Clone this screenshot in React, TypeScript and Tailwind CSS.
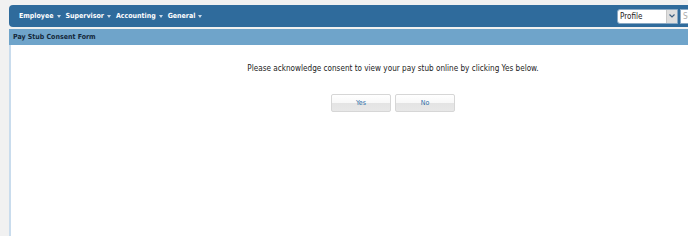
const navItems = ['Employee', 'Supervisor', 'Accounting', 'General'];

function Caret() {
  return (
    <svg aria-hidden="true" width="4" height="3" viewBox="0 0 4 3" className="ml-[3px] mt-[1px]">
      <path d="M0 0H4L2 3Z" fill="#c9d9e8" />
    </svg>
  );
}

function ConsentButton({ label }: { label: string }) {
  return (
    <button
      type="button"
      className="h-[18px] w-[60px] rounded-[2px] border border-[#d6d6d6] bg-[linear-gradient(#ffffff_0%,#f8f8f8_48%,#e4e4e4_52%,#e8e8e8_100%)] text-[7px] leading-[16px] text-[#2f6ea6] font-['DejaVu_Sans_Condensed','DejaVu_Sans',sans-serif]"
    >
      {label}
    </button>
  );
}

export default function App() {
  return (
    <div className="h-[236px] w-full overflow-hidden bg-[#f1f1f1] font-['DejaVu_Sans_Condensed','DejaVu_Sans',sans-serif]">
      <div className="relative h-[5px]">
        <span className="absolute left-[666px] top-[-7px] text-[8px] leading-[10px] text-[#333]">Welcome</span>
      </div>
      <div className="ml-[9px] w-[766px]">
        <div className="flex h-[22px] items-center rounded-[4px] bg-[#2f6b9c] pl-[10px] pr-[15px]">
          <nav className="flex items-center gap-[5px]">
            {navItems.map((item) => (
              <div key={item} className="flex items-center">
                <span className="text-[7px] font-bold text-white">{item}</span>
                <Caret />
              </div>
            ))}
          </nav>
          <div className="ml-auto flex items-center">
            <div className="flex h-[15px] w-[61px] items-center rounded-l-[3px] border border-[#8aa9c4] bg-white">
              <span className="flex-1 pl-[2px] text-[8px] leading-[13px] text-[#222]">Profile</span>
              <span className="flex h-full w-[11px] items-center justify-center border-l border-[#c8c8c8] bg-[#dedede]">
                <svg aria-hidden="true" width="6" height="4" viewBox="0 0 6 4">
                  <path d="M0.5 0.5L3 3L5.5 0.5" fill="none" stroke="#3d5f80" strokeWidth="1.2" />
                </svg>
              </span>
            </div>
            <div className="ml-[2px] flex h-[15px] w-[80px] items-center border border-[#8aa9c4] bg-white pl-[2px]">
              <span className="text-[8px] leading-[13px] text-[#aaa]">Search</span>
            </div>
          </div>
        </div>
        <div className="mt-[2px] flex h-[16px] items-center bg-[#6fa4ca] pl-[4px]">
          <span className="text-[7px] font-bold text-[#14283a]">Pay Stub Consent Form</span>
        </div>
        <div className="h-[200px] border-l-2 border-[#c9dced] bg-white">
          <p className="pt-[18px] text-center text-[8.1px] leading-[11px] text-[#222]">
            Please acknowledge consent to view your pay stub online by clicking Yes below.
          </p>
          <div className="mt-[20px] flex justify-center gap-[4px]">
            <ConsentButton label="Yes" />
            <ConsentButton label="No" />
          </div>
        </div>
      </div>
    </div>
  );
}
